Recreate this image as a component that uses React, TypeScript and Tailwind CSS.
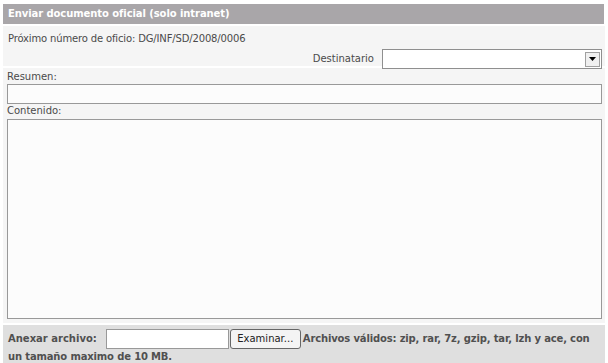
import React from "react";

export default function App() {
  const font = { fontFamily: "'DejaVu Sans', Verdana, sans-serif" };
  return (
    <div className="w-[608px] h-[363px] bg-white text-[#4a4a4a] text-[10px] leading-[12px] overflow-hidden" style={font}>
      <div className="pt-[4px] px-[3px]">
        <div className="h-[20px] bg-[#a9a6a9] text-white font-bold text-[10px] flex items-center pl-[5px] mr-[1px] tracking-[-0.08px]">
          Enviar documento oficial (solo intranet)
        </div>
        <div className="bg-[#f5f5f5] mt-[2px] h-[40px] flex flex-col pl-[5px] pr-[3px]">
          <div className="pt-[7px] tracking-[-0.15px]">Próximo número de oficio: DG/INF/SD/2008/0006</div>
          <div className="flex justify-end items-center gap-[8px] mt-[4px]">
            <span>Destinatario</span>
            <div className="w-[220px] h-[20px] bg-white border border-[#8f8f8f] flex justify-end items-center pr-[1px]">
              <div className="w-[15px] h-[15px] border border-[#a0a0a0] bg-[#f0f0f0] flex items-center justify-center">
                <svg width="7" height="4" viewBox="0 0 7 4"><path d="M0 0h7L3.5 4z" fill="#000" /></svg>
              </div>
            </div>
          </div>
        </div>
        <div className="bg-[#f5f5f5] mt-[2px] pl-[4px] pr-[3px] pb-[4px]">
          <div className="pt-[3px] h-[16px]">Resumen:</div>
          <div className="h-[20px] bg-[#fcfcfc] border border-[#999]"></div>
          <div className="h-[15px] pt-[1px]">Contenido:</div>
          <div className="h-[200px] bg-[#fcfcfc] border border-[#999]"></div>
        </div>
        <div className="bg-[#dfdfdf] mt-[2px] h-[40px] pl-[5px] pt-[4px] font-bold text-[#505050]">
          <div className="flex items-center h-[20px]">
            <span>Anexar archivo:</span>
            <span className="w-[123px] h-[20px] bg-white border border-[#999] ml-[9px]"></span>
            <span className="h-[20px] w-[71px] border border-[#666] rounded-[3px] bg-[#f4f4f4] text-[#222] font-normal flex items-center justify-center ml-[1px]">Examinar...</span>
            <span className="ml-[2px] tracking-[-0.15px]">Archivos válidos: zip, rar, 7z, gzip, tar, lzh y ace, con</span>
          </div>
          <div className="mt-[2px] tracking-[-0.15px]">un tamaño maximo de 10 MB.</div>
        </div>
      </div>
    </div>
  );
}
